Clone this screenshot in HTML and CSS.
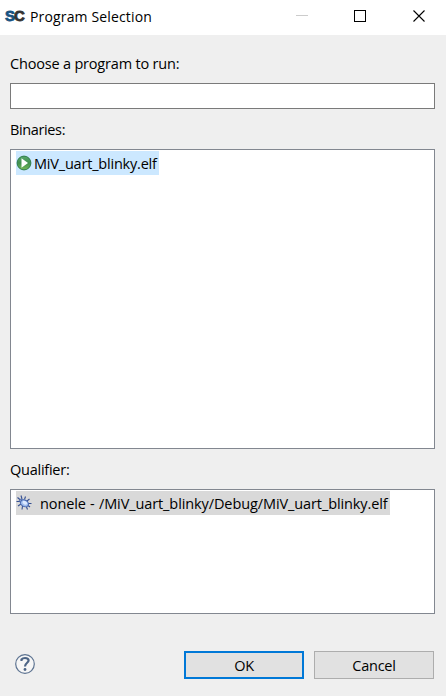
FILE: index.html
```html
<!DOCTYPE html>
<html lang="en">
<head>
<meta charset="utf-8">
<title>Program Selection</title>
<link rel="stylesheet" href="styles.css">
</head>
<body>
<div class="dialog">
  <header class="titlebar">
    <span class="logo"><span class="logo-s">S</span><span class="logo-c">C</span></span>
    <h1 class="title"><span>Program Selection</span></h1>
    <svg class="controls" width="130" height="12" viewBox="0 0 130 12" fill="none" shape-rendering="crispEdges">
      <path d="M0 5.5H12" stroke="#ccc"/>
      <rect x="58.5" y=".5" width="11" height="11" stroke="#000"/>
      <path d="M117.5.5l11 11M128.500.5l-11 11" stroke="#000" stroke-width="1.1" shape-rendering="auto"/>
    </svg>
  </header>
  <main class="content">
    <label class="label choose" for="filter">Choose a program to run:</label>
    <input class="filter" id="filter" type="text">
    <div class="label binaries-label">Binaries:</div>
    <div class="list binaries">
      <div class="item item-active">
        <svg width="16" height="16" viewBox="0 0 16 16">
          <defs><linearGradient id="green" x1="0" y1="0" x2="0" y2="1"><stop offset="0" stop-color="#58a76b"/><stop offset=".5" stop-color="#409050"/><stop offset="1" stop-color="#78b957"/></linearGradient></defs>
          <circle cx="8" cy="8" r="6.900" fill="url(#green)" stroke="#2f7d4c" stroke-width="1"/>
          <path d="M5.500 3.300v9.400L12 8z" fill="#fff"/>
        </svg>
        <span class="text elf">MiV_uart_blinky.elf</span>
      </div>
    </div>
    <div class="label qualifier-label">Qualifier:</div>
    <div class="list qualifiers">
      <div class="item item-muted">
        <svg width="16" height="16" viewBox="0 0 16 16" fill="none">
          <path d="M5 .5L6 4M9.500 1.500L8.500 4.500M1.500 2.500l3 2.500M.5 6.500H4M2 11l3-2M6 14.500l.5-3.500M10.500 12l1 2.500M12 10.500l2 1.500M12 8.500h3.500M11 6l2.500-2" stroke="#354f91" stroke-width="1.1"/>
          <circle cx="5" cy="5.800" r="1.700" fill="#8ba4d8" stroke="#3d5ba1" stroke-width=".7"/>
          <ellipse cx="8.500" cy="8.300" rx="4.200" ry="3.200" transform="rotate(30 8.500 8.300)" fill="#9dbbed" stroke="#4766ac"/>
          <ellipse cx="8.800" cy="7.800" rx="2.500" ry="1.700" transform="rotate(30 8.800 7.800)" fill="#dce9ff"/>
        </svg>
        <span class="text qualifier">nonele - /MiV_uart_blinky/Debug/MiV_uart_blinky.elf</span>
      </div>
    </div>
    <footer class="footer">
      <svg class="help" width="20" height="20" viewBox="0 0 20 20" fill="none">
        <circle cx="10" cy="10" r="9.300" fill="#f6f6f6" stroke="#5d7391" stroke-width="1.200"/>
        <path d="M6.500 7V5.500Q7.700 4 10 4Q13.600 4 13.600 6.600C13.600 8.800 10 8.900 10 12.500" stroke="#4c6485" stroke-width="2.200"/>
        <circle cx="10" cy="15.500" r="1.400" fill="#4c6485"/>
      </svg>
      <button class="button ok">OK</button>
      <button class="button cancel">Cancel</button>
    </footer>
  </main>
</div>
</body>
</html>
```

FILE: styles.css
```css
* { box-sizing: border-box; }
body { margin: 0; font: 14.5px/20px "Open Sans", sans-serif; color: #000; background: #efefef; }
.dialog { width: 446px; height: 696px; background: #efefef; }
.titlebar { height: 35px; background: #fff; display: flex; align-items: center; padding: 0 20px 3px 5px; }
.logo { width: 25px; display: flex; font: bold 15px/16px "Liberation Sans", sans-serif; }
.logo-s { color: #17517f; -webkit-text-stroke: .8px #17517f; }
.logo-c { color: #333; -webkit-text-stroke: .8px #333; margin-left: -1px; }
.title { margin: 0; padding-top: 2px; font-size: 14px; font-weight: 400; letter-spacing: .15px; white-space: nowrap; }
.controls { margin-left: auto; }
.content { padding: 18px 11px 0 10px; display: flex; flex-direction: column; }
.label { height: 20px; line-height: 22px; letter-spacing: -.25px; }
.choose { letter-spacing: -.19px; }
.binaries-label { letter-spacing: -.37px; }
.filter { width: 425px; height: 26px; margin: 10px 0; border: 1px solid #7a7a7a; background: #fff; padding: 0 5px; font: inherit; outline: none; }
.list { background: #fff; border: 1px solid #828790; padding: 1px 5px; }
.binaries { height: 300px; margin: 10px 0; }
.qualifiers { height: 125px; margin-top: 10px; }
.item { height: 24px; display: inline-flex; align-items: center; white-space: nowrap; }
.item-active { background: #cce8ff; width: 143px; }
.item-muted { background: #d9d9d9; width: 374px; }
.text { letter-spacing: -.2px; padding-top: 2px; }
.elf { margin-left: 2px; }
.qualifier { margin-left: 8px; letter-spacing: -.1px; word-spacing: .6px; }
.footer { margin-top: 37px; display: flex; align-items: center; height: 28px; padding-right: 1px; }
.help { margin: 0 auto 2px 5px; }
.button { width: 120px; height: 28px; padding: 2px 0 0; border: 1px solid #adadad; background: #e1e1e1; font: inherit; letter-spacing: -.25px; color: #000; }
.ok { border: 2px solid #0078d7; margin-right: 10px; }
```
